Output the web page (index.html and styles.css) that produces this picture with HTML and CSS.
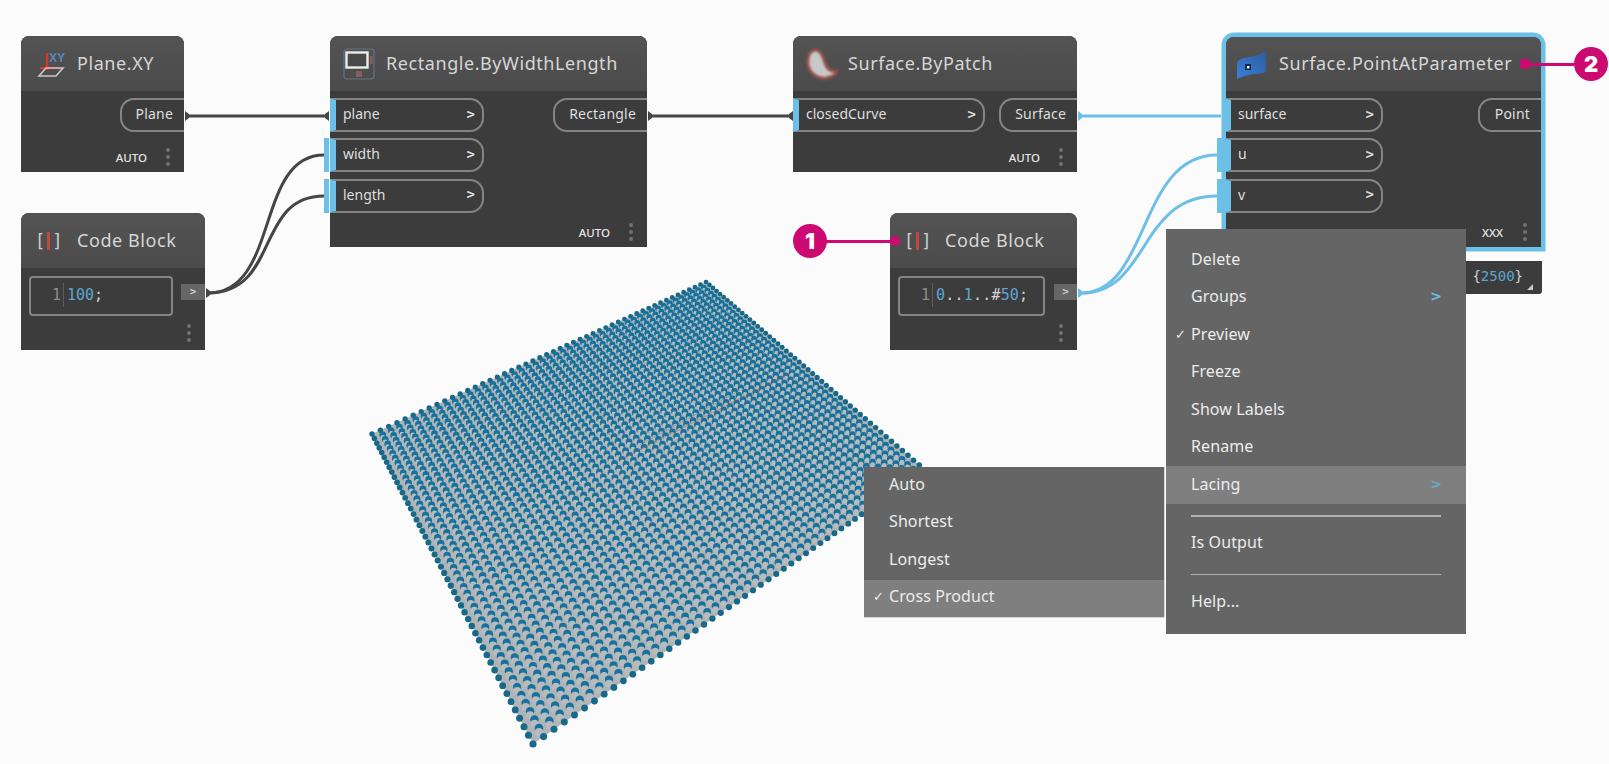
FILE: index.html
```html
<!DOCTYPE html>
<html lang="en">
<head>
<meta charset="utf-8">
<title>Dynamo lacing</title>
<link rel="stylesheet" href="styles.css">
</head>
<body>
<main class="canvas">
  <svg class="cloud" id="cloud" width="1609" height="764" aria-hidden="true"></svg>

  <svg class="wires" width="1609" height="764" aria-hidden="true">
    <g class="wire dark">
      <path d="M188 116H326"/>
      <path d="M650 116H791"/>
      <path d="M208 293C280 293 255 155 324 155"/>
      <path d="M208 293C280 293 255 196 324 196"/>
    </g>
    <g class="cap dark-cap">
      <path d="M185 111L189 114V118L185 121Z"/>
      <path d="M329 111L325 114V118L329 121Z"/>
      <path d="M648 111L652 114V118L648 121Z"/>
      <path d="M793 111L789 114V118L793 121Z"/>
      <path d="M206 288L210 291V295L206 298Z"/>
    </g>
    <g class="wire blue">
      <path d="M1081 116H1221"/>
      <path d="M1081 293C1150 293 1138 155 1217 155"/>
      <path d="M1081 293C1150 293 1138 196 1217 196"/>
    </g>
    <g class="cap blue-cap">
      <path d="M1078 111L1082 114V118L1078 121Z"/>
      <path d="M1078 288L1082 291V295L1078 298Z"/>
    </g>
  </svg>

  <section class="node n-plane">
    <header class="head">
      <svg class="icon soft" viewBox="0 0 32 32" aria-hidden="true">
        <path class="i-axis" d="M11 5V20"/><path class="i-axis" d="M4 20H24"/>
        <circle cx="11" cy="20" r="2.2" fill="#d8362c"/>
        <path d="M3 28L10 20H27L20 28Z" fill="none" stroke="#c9c9c9" stroke-width="1.6"/>
        <text class="i-xy" x="13" y="14">XY</text>
      </svg>
      <h2>Plane.XY</h2>
    </header>
    <div class="ports"><div class="col-out"><div class="out">Plane</div></div></div>
    <footer class="foot"><span class="lace">AUTO</span><span class="dots"><i></i><i></i><i></i></span></footer>
  </section>

  <section class="node n-code1">
    <header class="head">
      <span class="bracket"><b>[</b><i></i><b>]</b></span>
      <h2>Code Block</h2>
    </header>
    <div class="codebody">
      <div class="code"><span class="ln">1</span><span class="src"><span class="num">100</span>;</span></div>
      <div class="cout">&gt;</div>
    </div>
    <footer class="foot"><span class="dots"><i></i><i></i><i></i></span></footer>
  </section>

  <section class="node n-rect">
    <header class="head">
      <svg class="icon soft" viewBox="0 0 32 32" aria-hidden="true">
        <rect x="1" y="1" width="30" height="30" rx="3" fill="none" stroke="#5f7484" stroke-width="1.2"/>
        <rect x="3.5" y="4.5" width="21" height="15" fill="#4a4a4a" stroke="#ececec" stroke-width="2.4"/>
        <rect x="13" y="23" width="6" height="6" fill="#8a5a62"/>
        <rect x="27" y="8" width="2.5" height="8" fill="#8a5a62"/>
      </svg>
      <h2>Rectangle.ByWidthLength</h2>
    </header>
    <div class="ports">
      <div class="col-in">
        <div class="in"><span>plane</span><b>&gt;</b></div>
        <div class="in wired"><span>width</span><b>&gt;</b></div>
        <div class="in wired"><span>length</span><b>&gt;</b></div>
      </div>
      <div class="col-out"><div class="out">Rectangle</div></div>
    </div>
    <footer class="foot"><span class="lace">AUTO</span><span class="dots"><i></i><i></i><i></i></span></footer>
  </section>

  <section class="node n-patch">
    <header class="head">
      <svg class="icon blurry" viewBox="0 0 32 32" aria-hidden="true">
        <path class="i-blob" d="M9 2C3 3 1 10 2 17C4 26 12 31 20 30C26 29 31 26 31 23C25 24 21 21 19 15C17 8 14 1 9 2Z"/>
      </svg>
      <h2>Surface.ByPatch</h2>
    </header>
    <div class="ports">
      <div class="col-in"><div class="in"><span>closedCurve</span><b>&gt;</b></div></div>
      <div class="col-out"><div class="out">Surface</div></div>
    </div>
    <footer class="foot"><span class="lace">AUTO</span><span class="dots"><i></i><i></i><i></i></span></footer>
  </section>

  <section class="node n-code2">
    <header class="head">
      <span class="bracket"><b>[</b><i></i><b>]</b></span>
      <h2>Code Block</h2>
    </header>
    <div class="codebody">
      <div class="code"><span class="ln">1</span><span class="src"><span class="num">0</span>..<span class="num">1</span>..#<span class="num">50</span>;</span></div>
      <div class="cout">&gt;</div>
    </div>
    <footer class="foot"><span class="dots"><i></i><i></i><i></i></span></footer>
  </section>

  <section class="node n-point selected">
    <header class="head">
      <svg class="icon soft" viewBox="0 0 32 32" aria-hidden="true">
        <defs><linearGradient id="wave" x1="0" y1="1" x2="1" y2="0"><stop offset="0" stop-color="#3a7fdc"/><stop offset="1" stop-color="#2c5c9c"/></linearGradient></defs>
        <path d="M0 31V16C0 11 6 10 12 9C18 8 25 7 29 2V23C25 27 18 25 12 27C7 28 3 29 0 31Z" fill="url(#wave)"/>
        <rect x="8" y="16" width="6" height="6" fill="#13294a"/>
        <rect x="10" y="18" width="2.4" height="2.4" fill="#fff"/>
      </svg>
      <h2>Surface.PointAtParameter</h2>
    </header>
    <div class="ports">
      <div class="col-in">
        <div class="in"><span>surface</span><b>&gt;</b></div>
        <div class="in wired"><span>u</span><b>&gt;</b></div>
        <div class="in wired"><span>v</span><b>&gt;</b></div>
      </div>
      <div class="col-out"><div class="out">Point</div></div>
    </div>
    <footer class="foot"><span class="lace">XXX</span><span class="dots"><i></i><i></i><i></i></span></footer>
  </section>

  <div class="preview"><span>{<span class="num">2500</span>}</span><i class="grip"></i></div>

  <nav class="menu main-menu">
    <div class="item">Delete</div>
    <div class="item has-sub">Groups<span class="chev">&gt;</span></div>
    <div class="item"><span class="tick">✓</span>Preview</div>
    <div class="item">Freeze</div>
    <div class="item">Show Labels</div>
    <div class="item">Rename</div>
    <div class="item active has-sub">Lacing<span class="chev muted">&gt;</span></div>
    <hr class="sep thick">
    <div class="item">Is Output</div>
    <hr class="sep">
    <div class="item">Help...</div>
  </nav>

  <nav class="menu sub-menu">
    <div class="item">Auto</div>
    <div class="item">Shortest</div>
    <div class="item">Longest</div>
    <div class="item active"><span class="tick">✓</span>Cross Product</div>
  </nav>

  <div class="callout c1"><span class="badge">1</span><span class="lead"></span><span class="pin"></span></div>
  <div class="callout c2"><span class="pin"></span><span class="lead"></span><span class="badge">2</span></div>
</main>
<script src="cloud.js"></script>
</body>
</html>
```

FILE: styles.css
```css
* { box-sizing: border-box; }
html, body { margin: 0; height: 100%; overflow: hidden; }
body { background: #fbfbfb; font-family: "Noto Sans", "Open Sans", sans-serif; color: #dedede; }
.canvas { position: relative; width: 1609px; height: 764px; overflow: hidden; }
.cloud, .wires { position: absolute; left: 0; top: 0; }
.wire path { fill: none; stroke-width: 3; }
.dark path { stroke: #454545; }
.blue path { stroke: #6cbfe6; }
.dark-cap path { fill: #454545; }
.blue-cap path { fill: #6cbfe6; }

/* Nodes */
.node { position: absolute; display: flex; flex-direction: column; background: #3c3c3c; border-radius: 8px 8px 0 0; }
.n-plane { left: 21px; top: 36px; width: 163px; height: 136px; }
.n-code1 { left: 21px; top: 213px; width: 184px; height: 137px; }
.n-rect  { left: 330px; top: 36px; width: 317px; height: 211px; }
.n-patch { left: 793px; top: 36px; width: 284px; height: 136px; }
.n-code2 { left: 890px; top: 213px; width: 187px; height: 137px; }
.n-point { left: 1226px; top: 37px; width: 315px; height: 210px; }
.selected { box-shadow: 0 0 0 4.5px #6cbfe6; }

.head { flex: none; display: flex; align-items: center; height: 55px; padding-left: 13px; gap: 11px; background: linear-gradient(#535353, #4b4b4b); border-radius: 8px 8px 0 0; }
.head h2 { margin: 0 0 2px; font-size: 18px; font-weight: 400; letter-spacing: .57px; color: #d6d6d6; white-space: nowrap; }
.n-point .head { height: 54px; padding-left: 11px; gap: 10px; }
.n-plane .head { padding-left: 15px; gap: 9px; }
.n-patch .head { gap: 10px; }
.icon { flex: none; width: 32px; height: 32px; }
.soft { filter: blur(.35px); }
.blurry { filter: blur(.8px); }
.i-axis { stroke: #d8362c; stroke-width: 2.2; fill: none; }
.i-xy { font: 700 12px "Liberation Sans", sans-serif; fill: #5a86c8; }
.i-blob { fill: #c8c8c8; stroke: #96504c; stroke-width: 3; }

.bracket { display: flex; align-items: center; gap: 3px; width: 28px; margin-left: 2px; }
.bracket b { font: 400 17px "DejaVu Sans Mono", monospace; color: #cfcfcf; }
.bracket i { width: 3px; height: 18px; background: #c4473b; margin: 0 -1px; }
.n-code1 .head { padding-left: 12px; gap: 14px; }
.n-code2 .head { padding-left: 12px; gap: 13px; }

.ports { flex: 1; display: flex; justify-content: space-between; align-items: flex-start; padding-top: 7px; }
.col-in, .col-out { display: flex; flex-direction: column; gap: 6.3px; }
.col-out { margin-left: auto; }
.in, .out { display: flex; align-items: center; height: 34px; font-size: 14px; color: #dedede; border: 2px solid #858585; }
.in { position: relative; justify-content: space-between; padding: 0 7px 3px 7px; border-left: 6px solid #6cbfe6; border-radius: 0 14px 14px 0; }
.in b { font: 700 14px "DejaVu Sans Mono", monospace; }
.in.wired::before { content: ""; position: absolute; left: -12px; top: -2px; bottom: -2px; width: 5px; background: #6cbfe6; }
.out { justify-content: flex-end; padding: 0 11px 3px 14px; border-right: 0; border-radius: 14px 0 0 14px; letter-spacing: .2px; }

.n-rect .in { width: 154px; }
.n-rect .out { width: 94px; }
.n-patch .in { width: 192px; }
.n-patch .out { width: 78px; }
.n-plane .out { width: 64px; }
.n-point .in { width: 158px; margin-left: -1px; }
.n-point .out { width: 63px; }
.n-point .in.wired::before { left: -14px; width: 9px; }

.foot { flex: none; height: 30px; display: flex; align-items: center; justify-content: flex-end; gap: 19px; padding-right: 14px; }
.lace { font-size: 11.5px; font-weight: 500; color: #e4e4e4; }
.n-point .lace { margin-right: 1px; }
.dots { display: flex; flex-direction: column; gap: 3px; }
.dots i { display: block; width: 4px; height: 4px; border-radius: 50%; background: #727272; }

.codebody { flex: 1; display: flex; justify-content: space-between; align-items: flex-start; padding: 8px 0 0 8px; }
.code { display: flex; align-items: center; height: 40px; padding-bottom: 2px; border: 2px solid #858585; border-radius: 4px; font: 15px "DejaVu Sans Mono", monospace; color: #d4d4d4; }
.n-code1 .code { width: 144px; }
.n-code2 .code { width: 147px; }
.ln { height: 24px; padding-right: 2px; line-height: 24px; text-align: right; color: #8c8c8c; border-right: 1px solid #5c5c5c; }
.n-code1 .ln { width: 33px; }
.n-code2 .ln { width: 33px; }
.src { padding-left: 3px; }
.n-code2 .src { letter-spacing: .2px; }
.num { color: #5ba6d0; }
.cout { width: 24px; height: 16px; margin-top: 8px; background: #666; color: #c9c9c9; font: 700 11px/15px "DejaVu Sans Mono", monospace; text-align: center; }
.n-code2 .cout { width: 23px; }
.n-code1 .foot, .n-code2 .foot { height: 34px; }

.preview { position: absolute; left: 1440px; top: 261px; width: 102px; height: 33px; display: flex; align-items: center; justify-content: flex-end; padding: 0 19px 3px 0; background: #3c3c3c; border-radius: 0 0 3px 3px; font: 14px "DejaVu Sans Mono", monospace; color: #cfcfcf; }
.grip { position: absolute; right: 9px; bottom: 4px; width: 0; height: 0; border-left: 6px solid transparent; border-bottom: 6px solid #c8c8c8; }

/* Menus */
.menu { position: absolute; background: #656565; color: #ececec; font-size: 16px; letter-spacing: .1px; }
.main-menu { left: 1166px; top: 229px; width: 300px; height: 405px; padding-top: 12px; }
.sub-menu { left: 864px; top: 467px; width: 300px; height: 150px; box-shadow: 0 1px 0 #d5d5d5, 1px 0 0 #d5d5d5; }
.item { position: relative; display: flex; align-items: center; height: 37.5px; padding: 0 0 2px 25px; }
.active { background: #7f7f7f; }
.tick { position: absolute; left: 9px; font-size: 13px; }
.chev { position: absolute; right: 24px; font: 700 14px "DejaVu Sans", sans-serif; color: #6cbfe6; }
.chev.muted { color: #6aa9c4; }
.sep { margin: 11px 25px 8px; height: 1px; border: 0; background: #b0b0b0; }
.sep.thick { height: 2px; }
.sep + .item + .sep { margin-top: 12px; }
.sub-menu .item { padding-bottom: 4px; }

/* Callouts */
.callout { position: absolute; display: flex; align-items: center; }
.c1 { left: 793px; top: 224px; }
.c2 { left: 1520px; top: 47px; }
.badge { width: 34px; height: 34px; border-radius: 50%; background: #cc0a72; color: #fff; font: 900 22px/34px "Inter", "DejaVu Sans", sans-serif; text-align: center; }
.lead { height: 3px; background: #cc0a72; }
.c1 .lead { width: 66px; margin-left: -1px; }
.c2 .lead { width: 46px; }
.pin { width: 10px; height: 10px; border-radius: 50%; background: #cc0a72; margin-left: -2px; }
.c2 .pin { margin: 0 -2px 0 0; border-radius: 3px; }
```

FILE: cloud.js
```js
// Draws the 50 x 50 point preview in perspective.
(function () {
  var svg = document.getElementById('cloud');
  var NS = 'http://www.w3.org/2000/svg';
  var A = [372, 434], B = [706, 282], C = [925, 470], D = [533, 744];

  function homography(p0, p1, p2, p3) {
    var dx1 = p1[0] - p2[0], dx2 = p3[0] - p2[0], sx = p0[0] - p1[0] + p2[0] - p3[0];
    var dy1 = p1[1] - p2[1], dy2 = p3[1] - p2[1], sy = p0[1] - p1[1] + p2[1] - p3[1];
    var det = dx1 * dy2 - dx2 * dy1;
    var g = (sx * dy2 - dx2 * sy) / det, h = (dx1 * sy - sx * dy1) / det;
    return function (u, v) {
      var w = g * u + h * v + 1;
      return [
        ((p1[0] - p0[0] + g * p1[0]) * u + (p3[0] - p0[0] + h * p3[0]) * v + p0[0]) / w,
        ((p1[1] - p0[1] + g * p1[1]) * u + (p3[1] - p0[1] + h * p3[1]) * v + p0[1]) / w
      ];
    };
  }
  var map = homography(A, B, C, D);

  function add(tag, attrs) {
    var el = document.createElementNS(NS, tag);
    for (var k in attrs) el.setAttribute(k, attrs[k]);
    svg.appendChild(el);
  }

  add('polygon', { points: [A, B, C, D].map(function (p) { return p.join(','); }).join(' '), fill: '#b0b4b6' });

  var pts = [];
  for (var i = 0; i < 50; i++) {
    for (var j = 0; j < 50; j++) {
      var p = map(i / 49, j / 49), q = map((i + 1) / 49, j / 49), s = map(i / 49, (j + 1) / 49);
      var sp = (Math.hypot(q[0] - p[0], q[1] - p[1]) + Math.hypot(s[0] - p[0], s[1] - p[1])) / 2;
      pts.push({ x: p[0], y: p[1], sp: sp, edge: i === 0 || j === 0 || i === 49 || j === 49 });
    }
  }
  pts.sort(function (a, b) { return a.y - b.y; });
  pts.forEach(function (p) {
    var r = 1.6 + 0.24 * p.sp;
    var t = Math.max(0, Math.min(1, (p.sp - 5) / 5));
    if (p.edge) {
      add('circle', { cx: p.x, cy: p.y, r: r * 0.82, fill: '#17698a' });
    } else {
      add('circle', { cx: p.x, cy: p.y, r: r, fill: '#16729c' });
      add('circle', { cx: p.x, cy: p.y + r * (0.6 + 0.35 * t), r: r * (0.5 + 0.42 * t), fill: '#b8bcbe' });
    }
  });

  // Faint axis and construction lines showing through the points.
  add('path', { d: 'M620 460L790 373', fill: 'none', stroke: '#b0523f', 'stroke-width': 1, opacity: 0.45 });
  add('path', { d: 'M620 460L590 385M640 445L740 390', fill: 'none', stroke: '#2c5a55', 'stroke-width': 1, opacity: 0.3 });
})();
```
